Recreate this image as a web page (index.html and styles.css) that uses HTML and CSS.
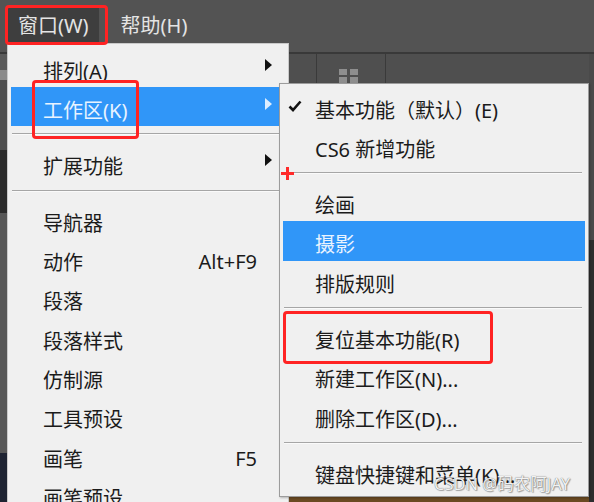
FILE: index.html
```html
<!DOCTYPE html>
<html lang="zh-CN">
<head>
  <meta charset="UTF-8">
  <meta name="viewport" content="width=device-width, initial-scale=1.0">
  <title>窗口 - 工作区</title>
  <link rel="stylesheet" href="styles.css">
</head>
<body>
  <div class="screen">

    <!-- top menu bar -->
    <div class="menubar">
      <span class="top-item active">窗口(W)</span>
      <span class="top-item">帮助(H)</span>
    </div>

    <!-- app area behind the menus -->
    <div class="workspace">
      <div class="left-strip"></div>
      <div class="doc">
        <div class="tabbar">
          <div class="tab tab-wide"></div>
          <div class="tab tab-icon">
            <svg width="26" height="16" viewBox="0 0 26 16">
              <rect x="1" y="1" width="8" height="6" fill="#8e8e8e"/>
              <rect x="1" y="9" width="8" height="6" fill="#8e8e8e"/>
              <rect x="12" y="1" width="8" height="6" fill="#8e8e8e"/>
              <rect x="12" y="9" width="8" height="6" fill="#8e8e8e"/>
            </svg>
          </div>
          <div class="tab tab-rest"></div>
        </div>
        <div class="canvas"></div>
      </div>
      <div class="right-strip"></div>
    </div>

    <!-- Window menu -->
    <ul class="menu menu-main">
      <li class="item has-sub"><span class="gutter"></span><span class="label">排列(A)</span><span class="key"></span><span class="arrow"></span></li>
      <li class="item has-sub selected"><span class="gutter"></span><span class="label">工作区(K)</span><span class="key"></span><span class="arrow"></span></li>
      <li class="sep"></li>
      <li class="item has-sub"><span class="gutter"></span><span class="label">扩展功能</span><span class="key"></span><span class="arrow"></span></li>
      <li class="sep"></li>
      <li class="item"><span class="gutter"></span><span class="label">导航器</span><span class="key"></span></li>
      <li class="item"><span class="gutter"></span><span class="label">动作</span><span class="key">Alt+F9</span></li>
      <li class="item"><span class="gutter"></span><span class="label">段落</span><span class="key"></span></li>
      <li class="item"><span class="gutter"></span><span class="label">段落样式</span><span class="key"></span></li>
      <li class="item"><span class="gutter"></span><span class="label">仿制源</span><span class="key"></span></li>
      <li class="item"><span class="gutter"></span><span class="label">工具预设</span><span class="key"></span></li>
      <li class="item"><span class="gutter"></span><span class="label">画笔</span><span class="key">F5</span></li>
      <li class="item"><span class="gutter"></span><span class="label">画笔预设</span><span class="key"></span></li>
    </ul>

    <!-- Workspace submenu -->
    <ul class="menu menu-sub">
      <li class="item">
        <span class="gutter">
          <svg class="check" width="14" height="12" viewBox="0 0 14 12">
            <path d="M1.5 6.5 L5 10 L12.5 1.5" fill="none" stroke="#111" stroke-width="2.6"/>
          </svg>
        </span>
        <span class="label">基本功能（默认）(E)</span>
      </li>
      <li class="item"><span class="gutter"></span><span class="label">CS6 新增功能</span></li>
      <li class="sep"></li>
      <li class="item"><span class="gutter"></span><span class="label">绘画</span></li>
      <li class="item selected"><span class="gutter"></span><span class="label">摄影</span></li>
      <li class="item"><span class="gutter"></span><span class="label">排版规则</span></li>
      <li class="sep"></li>
      <li class="item"><span class="gutter"></span><span class="label">复位基本功能(R)</span></li>
      <li class="item"><span class="gutter"></span><span class="label">新建工作区(N)...</span></li>
      <li class="item"><span class="gutter"></span><span class="label">删除工作区(D)...</span></li>
      <li class="sep"></li>
      <li class="item"><span class="gutter"></span><span class="label">键盘快捷键和菜单(K)...</span></li>
    </ul>

    <!-- red annotations drawn over the screenshot -->
    <div class="mark mark-window"></div>
    <div class="mark mark-workspace"></div>
    <div class="mark mark-reset"></div>
    <div class="cursor-plus"></div>

    <div class="watermark">CSDN @码农阿JAY</div>
  </div>
</body>
</html>
```

FILE: styles.css
```css
/* Global */
body {
    margin: 0;
    padding: 0;
    background-color: #535353;
    font-family: "Noto Sans", "Noto Sans CJK SC", sans-serif;
}

.screen {
    position: relative;
    width: 594px;
    height: 502px;
    overflow: hidden;
    background-color: #535353;
}

/* Menu bar */
.menubar {
    display: flex;
    align-items: flex-start;
    height: 52px;
    padding-left: 8px;
    border-bottom: 2px solid #393939;
    box-sizing: content-box;
}

.top-item {
    height: 35px;
    margin-top: 8px;
    padding: 0 10px;
    line-height: 35px;
    font-size: 20px;
    color: #e4e4e4;
}

.top-item.active {
    background-color: #3e3e3e;
    margin-right: 12px;
}

/* Background app area */
.workspace {
    display: flex;
    height: 448px;
}

.left-strip {
    width: 7px;
    background: linear-gradient(to bottom,
        #5a5a5a 0, #5a5a5a 16px,
        #8a8a8a 16px, #8a8a8a 26px,
        #4e4e4e 26px, #4e4e4e 96px,
        #2b2b2b 96px, #2b2b2b 159px,
        #575757 159px, #575757 399px,
        #1e2332 399px);
}

.right-strip {
    width: 5px;
    background: linear-gradient(to bottom, #4a4a4a 0, #4a4a4a 186px, #2d2d2d 186px);
}

.doc {
    flex: 1;
    display: flex;
    flex-direction: column;
}

.tabbar {
    display: flex;
    height: 32px;
    background-color: #4f4f4f;
}

.tab {
    border-right: 1px solid #3a3a3a;
}

.tab-wide {
    width: 309px;
}

.tab-icon {
    width: 69px;
    display: flex;
    justify-content: center;
    padding-top: 14px;
    box-sizing: border-box;
}

.tab-rest {
    flex: 1;
    border-right: none;
}

.canvas {
    flex: 1;
    background: linear-gradient(to bottom, #3b3b3b 0, #3b3b3b 408px, #6a4a22 408px);
}

/* Drop-down menus */
.menu {
    position: absolute;
    margin: 0;
    list-style: none;
    background-color: #f0f0f0;
    box-sizing: border-box;
    font-size: 20px;
    color: #1b1b1b;
}

.menu-main {
    left: 7px;
    top: 43px;
    width: 282px;
    height: 480px;
    padding: 3.7px 3px 0;
    border: 1px solid #c9c9c9;
}

.menu-sub {
    left: 279px;
    top: 83px;
    width: 310px;
    height: 414px;
    padding: 2.4px 3px 0;
    border: 1px solid #9c9c9c;
    box-shadow: 1px 1px 2px rgba(0, 0, 0, 0.25);
}

.item {
    display: flex;
    align-items: center;
    height: 39.3px;
    padding-top: 6px;
    box-sizing: border-box;
    white-space: nowrap;
}

.item.selected {
    background-color: #3096f8;
    color: #e9f3ff;
}

.gutter {
    width: 32px;
    flex: none;
    display: flex;
    align-items: center;
}

.check {
    margin-left: 5px;
    margin-top: -6px;
}

.label {
    flex: 1;
}

.key {
    padding-right: 28px;
}

.key:empty {
    padding-right: 0;
}

.arrow {
    align-self: flex-start;
    width: 20px;
    height: 12px;
    margin-top: 5px;
    box-sizing: border-box;
    border-left: 7px solid #111;
    border-top: 6px solid transparent;
    border-bottom: 6px solid transparent;
    border-right: 13px solid transparent;
}

.item.selected .arrow {
    border-left-color: #dcedff;
}

.sep {
    height: 2px;
    margin: 7px 3px 8px 1px;
    background: linear-gradient(to bottom, #a6a6a6 0, #a6a6a6 1px, #fafafa 1px);
}

/* Red annotation marks */
.mark {
    position: absolute;
    border: 3px solid #ff2323;
    border-radius: 4px;
    box-sizing: border-box;
}

.mark-window {
    left: 5px;
    top: 5px;
    width: 103px;
    height: 40px;
}

.mark-workspace {
    left: 32px;
    top: 80px;
    width: 107px;
    height: 59px;
}

.mark-reset {
    left: 283px;
    top: 311px;
    width: 210px;
    height: 53px;
}

.cursor-plus {
    position: absolute;
    left: 281px;
    top: 167px;
    width: 13px;
    height: 13px;
    background:
        linear-gradient(#ff2a2a, #ff2a2a) center / 13px 3px no-repeat,
        linear-gradient(#ff2a2a, #ff2a2a) center / 3px 13px no-repeat;
}

.watermark {
    position: absolute;
    left: 434px;
    top: 473px;
    font-size: 16.5px;
    line-height: 22px;
    color: #f2f2f2;
    text-shadow: 0 0 1px #555, 1px 1px 1px rgba(0, 0, 0, 0.3);
    white-space: nowrap;
}
```
